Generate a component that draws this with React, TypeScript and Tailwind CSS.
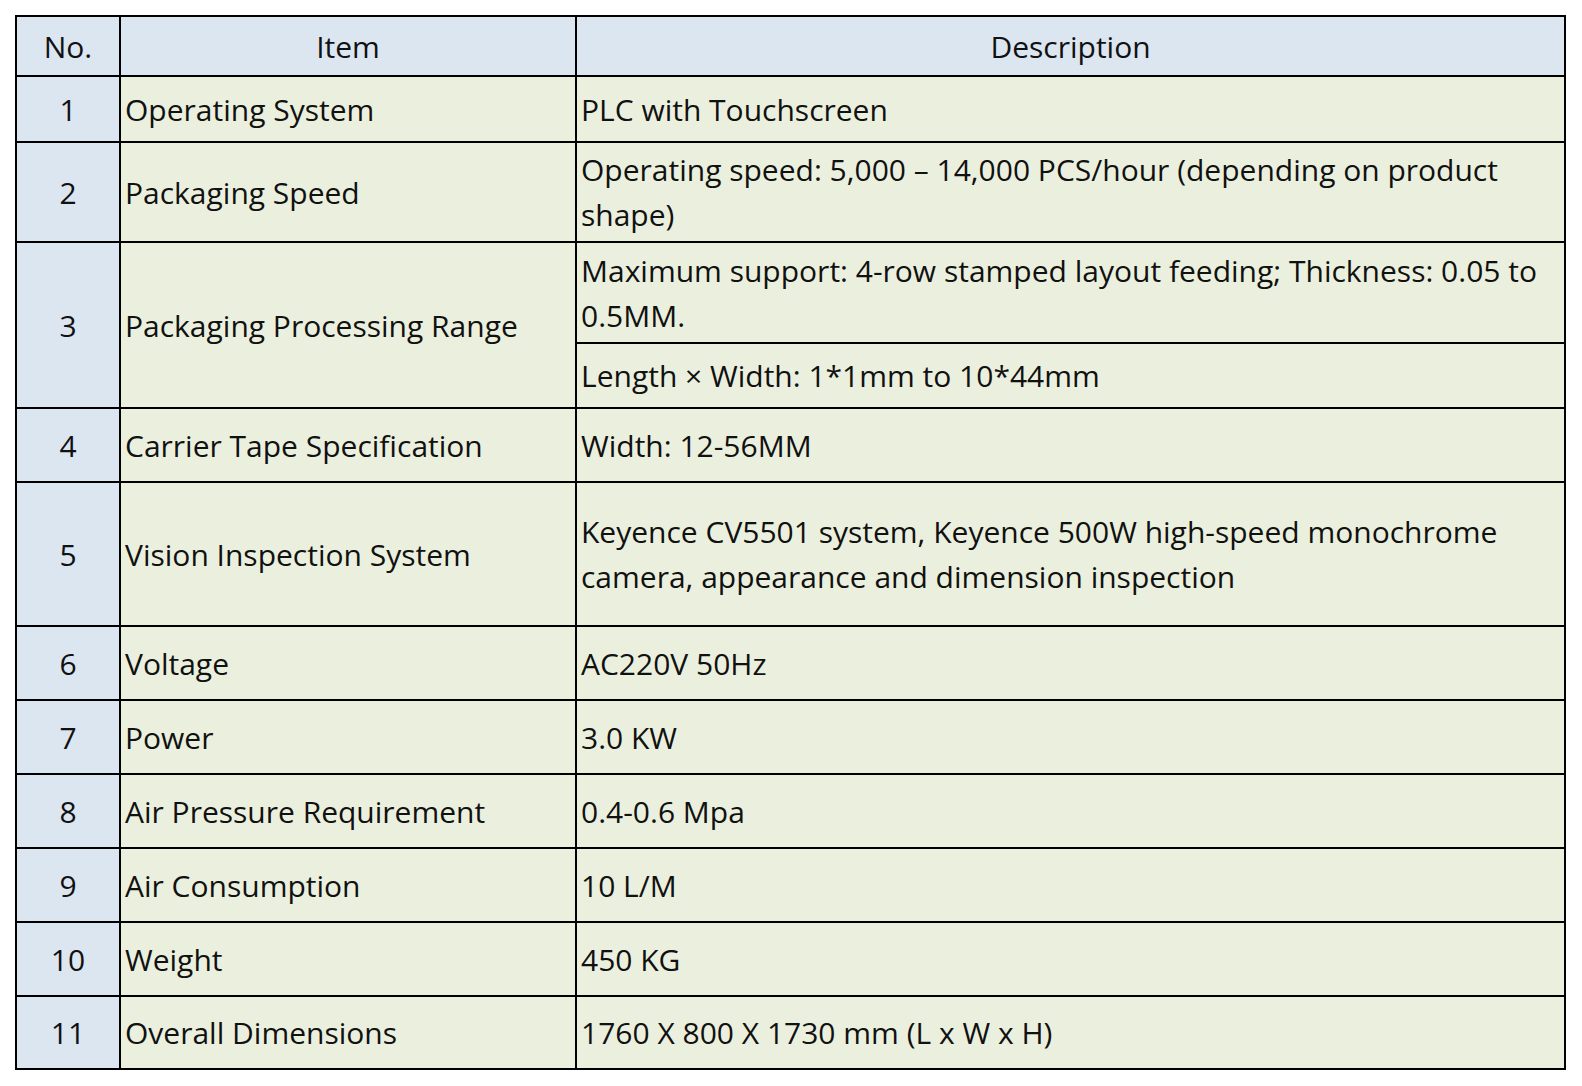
import React from 'react';

type Row = {
  no: string;
  item: string;
  desc: React.ReactNode[];
  h: string;
};

const rows: Row[] = [
  { no: '1', item: 'Operating System', desc: ['PLC with Touchscreen'], h: 'h-[64px]' },
  {
    no: '2',
    item: 'Packaging Speed',
    desc: ['Operating speed: 5,000 – 14,000 PCS/hour (depending on product', 'shape)'],
    h: 'h-[98px]',
  },
];

const rest: Row[] = [
  { no: '4', item: 'Carrier Tape Specification', desc: ['Width: 12-56MM'], h: 'h-[72px]' },
  {
    no: '5',
    item: 'Vision Inspection System',
    desc: [
      'Keyence CV5501 system, Keyence 500W high-speed monochrome',
      'camera, appearance and dimension inspection',
    ],
    h: 'h-[142px]',
  },
  { no: '6', item: 'Voltage', desc: ['AC220V 50Hz'], h: 'h-[72px]' },
  { no: '7', item: 'Power', desc: ['3.0 KW'], h: 'h-[72px]' },
  { no: '8', item: 'Air Pressure Requirement', desc: ['0.4-0.6 Mpa'], h: 'h-[72px]' },
  { no: '9', item: 'Air Consumption', desc: ['10 L/M'], h: 'h-[72px]' },
  { no: '10', item: 'Weight', desc: ['450 KG'], h: 'h-[72px]' },
  { no: '11', item: 'Overall Dimensions', desc: ['1760 X 800 X 1730 mm (L x W x H)'], h: 'h-[71px]' },
];

const NoCell = ({ children, className = '' }: { children: React.ReactNode; className?: string }) => (
  <div className={`bg-[#dce6f1] flex items-center justify-center ${className}`}>{children}</div>
);

const TextCell = ({ lines, className = '' }: { lines: React.ReactNode[]; className?: string }) => (
  <div className={`bg-[#ebf0de] flex flex-col justify-center pl-[4px] leading-[45px] whitespace-nowrap ${className}`}>
    {lines.map((l, i) => (
      <span key={i}>{l}</span>
    ))}
  </div>
);

const SpecRow = ({ row }: { row: Row }) => (
  <>
    <NoCell className={row.h}>{row.no}</NoCell>
    <TextCell lines={[row.item]} className={row.h} />
    <TextCell lines={row.desc} className={row.h} />
  </>
);

export default function App() {
  return (
    <div
      className="w-[1582px] h-[1086px] bg-white pt-[15px] pl-[15px] text-[30px] text-[#111111]"
      style={{ fontFamily: '"Open Sans", "Noto Sans", sans-serif' }}
    >
      <div className="inline-grid grid-cols-[102px_454px_987px] gap-[2px] p-[2px] bg-black">
        {/* header */}
        <div className="h-[58px] bg-[#dce6f1] flex items-center justify-center">No.</div>
        <div className="h-[58px] bg-[#dce6f1] flex items-center justify-center">Item</div>
        <div className="h-[58px] bg-[#dce6f1] flex items-center justify-center">Description</div>

        {rows.map((r) => (
          <SpecRow key={r.no} row={r} />
        ))}

        {/* row 3 has two description lines */}
        <NoCell className="row-span-2">3</NoCell>
        <TextCell lines={['Packaging Processing Range']} className="row-span-2" />
        <TextCell
          lines={['Maximum support: 4-row stamped layout feeding; Thickness: 0.05 to', '0.5MM.']}
          className="h-[99px]"
        />
        <TextCell lines={['Length × Width: 1*1mm to 10*44mm']} className="h-[63px]" />

        {rest.map((r) => (
          <SpecRow key={r.no} row={r} />
        ))}
      </div>
    </div>
  );
}
